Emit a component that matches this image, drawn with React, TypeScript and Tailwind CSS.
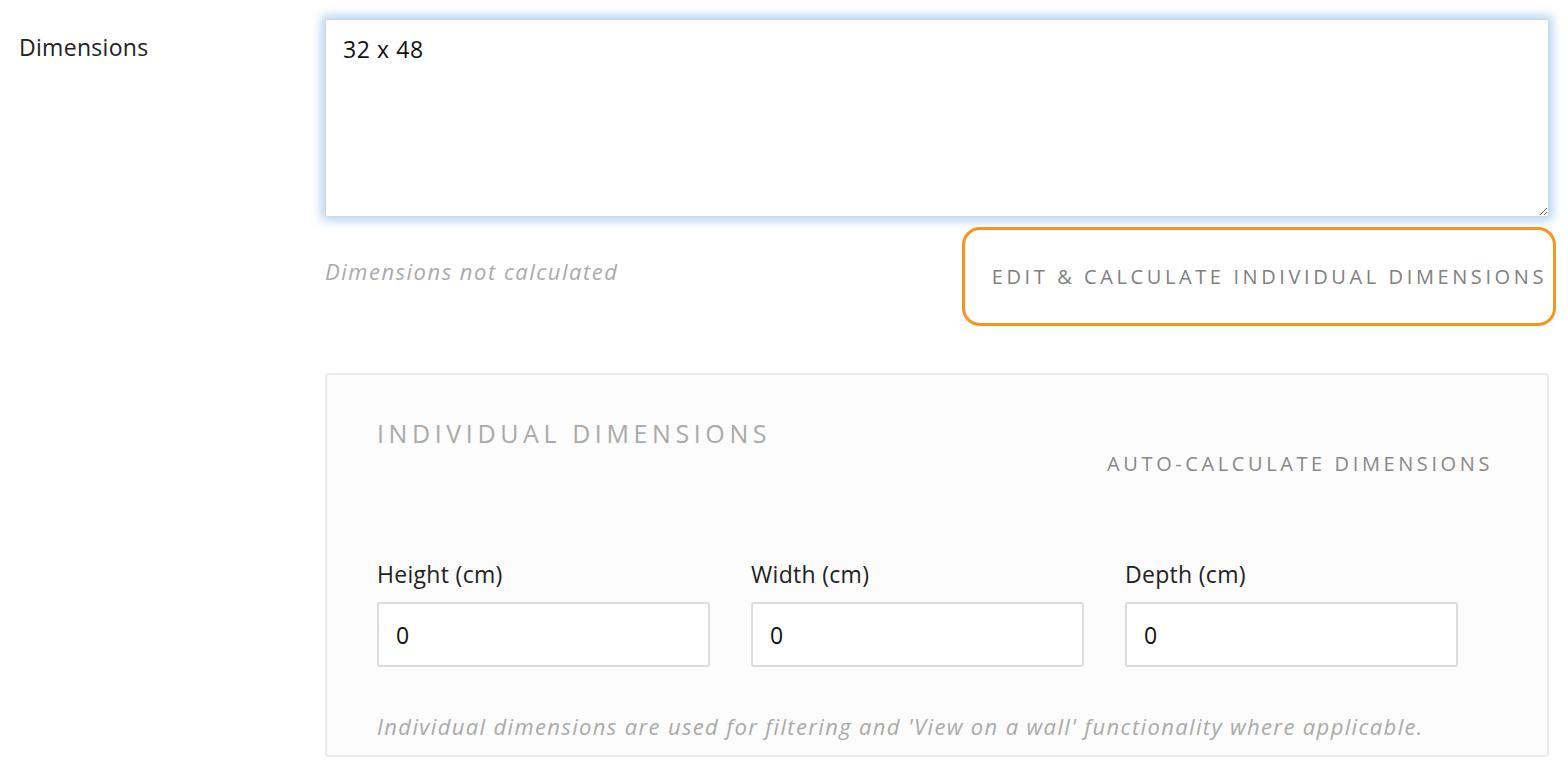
import React from "react";

const font = { fontFamily: "'Open Sans', Lato, sans-serif" };

function DimInput({ label }: { label: string }) {
  return (
    <div className="flex flex-col w-[333px]">
      <label className="text-[23px] leading-[28px] tracking-[0.3px] text-[#222] mb-[14px]">{label}</label>
      <input
        defaultValue="0"
        className="h-[65px] w-full rounded-[3px] border-2 border-[#dcdcdc] bg-white px-[17px] text-[23px] text-[#111] outline-none"
      />
    </div>
  );
}

export default function App() {
  return (
    <div className="min-h-screen bg-white" style={font}>
      <div className="flex pt-[19px]">
        {/* Label column */}
        <div className="w-[325px] pl-[19px] pt-[14px]">
          <span className="text-[23px] leading-[28px] tracking-[0.3px] text-[#222]">Dimensions</span>
        </div>

        {/* Field column */}
        <div className="w-[1224px]">
          <textarea
            defaultValue="32 x 48"
            className="block h-[198px] w-full resize-y rounded-[2px] border border-[#d6d6d6] bg-white px-[17px] py-[15px] text-[23px] leading-[28px] tracking-[0.6px] text-[#111] outline-none shadow-[0_0_10px_4px_rgba(120,180,235,0.55)]"
          />

          <div className="mt-[10px] flex items-center justify-between">
            <span className="-mt-[10px] text-[22px] italic tracking-[1.5px] text-[#aaa]">Dimensions not calculated</span>
            <button className="mr-[-7px] h-[99px] rounded-[18px] border-[3px] border-[#f7941d] pl-[27px] pr-[6px] text-[20px] tracking-[3.6px] text-[#808080]">
              EDIT &amp; CALCULATE INDIVIDUAL DIMENSIONS
            </button>
          </div>

          {/* Individual dimensions panel */}
          <div className="mt-[47px] h-[384px] rounded-[4px] border-2 border-[#ebebeb] bg-[#fcfcfc] pl-[50px] pr-[54px] pt-[42px]">
            <h3 className="text-[25px] leading-[32px] tracking-[4.6px] text-[#aaa]">INDIVIDUAL DIMENSIONS</h3>
            <div className="mt-[2px] flex justify-end">
              <button className="text-[20px] leading-[26px] tracking-[3.6px] text-[#888]">AUTO-CALCULATE DIMENSIONS</button>
            </div>

            <div className="mt-[83px] flex gap-[41px]">
              <DimInput label="Height (cm)" />
              <DimInput label="Width (cm)" />
              <DimInput label="Depth (cm)" />
            </div>

            <p className="mt-[43px] text-[22px] italic tracking-[1.35px] text-[#aaa]">
              Individual dimensions are used for filtering and 'View on a wall' functionality where applicable.
            </p>
          </div>
        </div>
      </div>
    </div>
  );
}
